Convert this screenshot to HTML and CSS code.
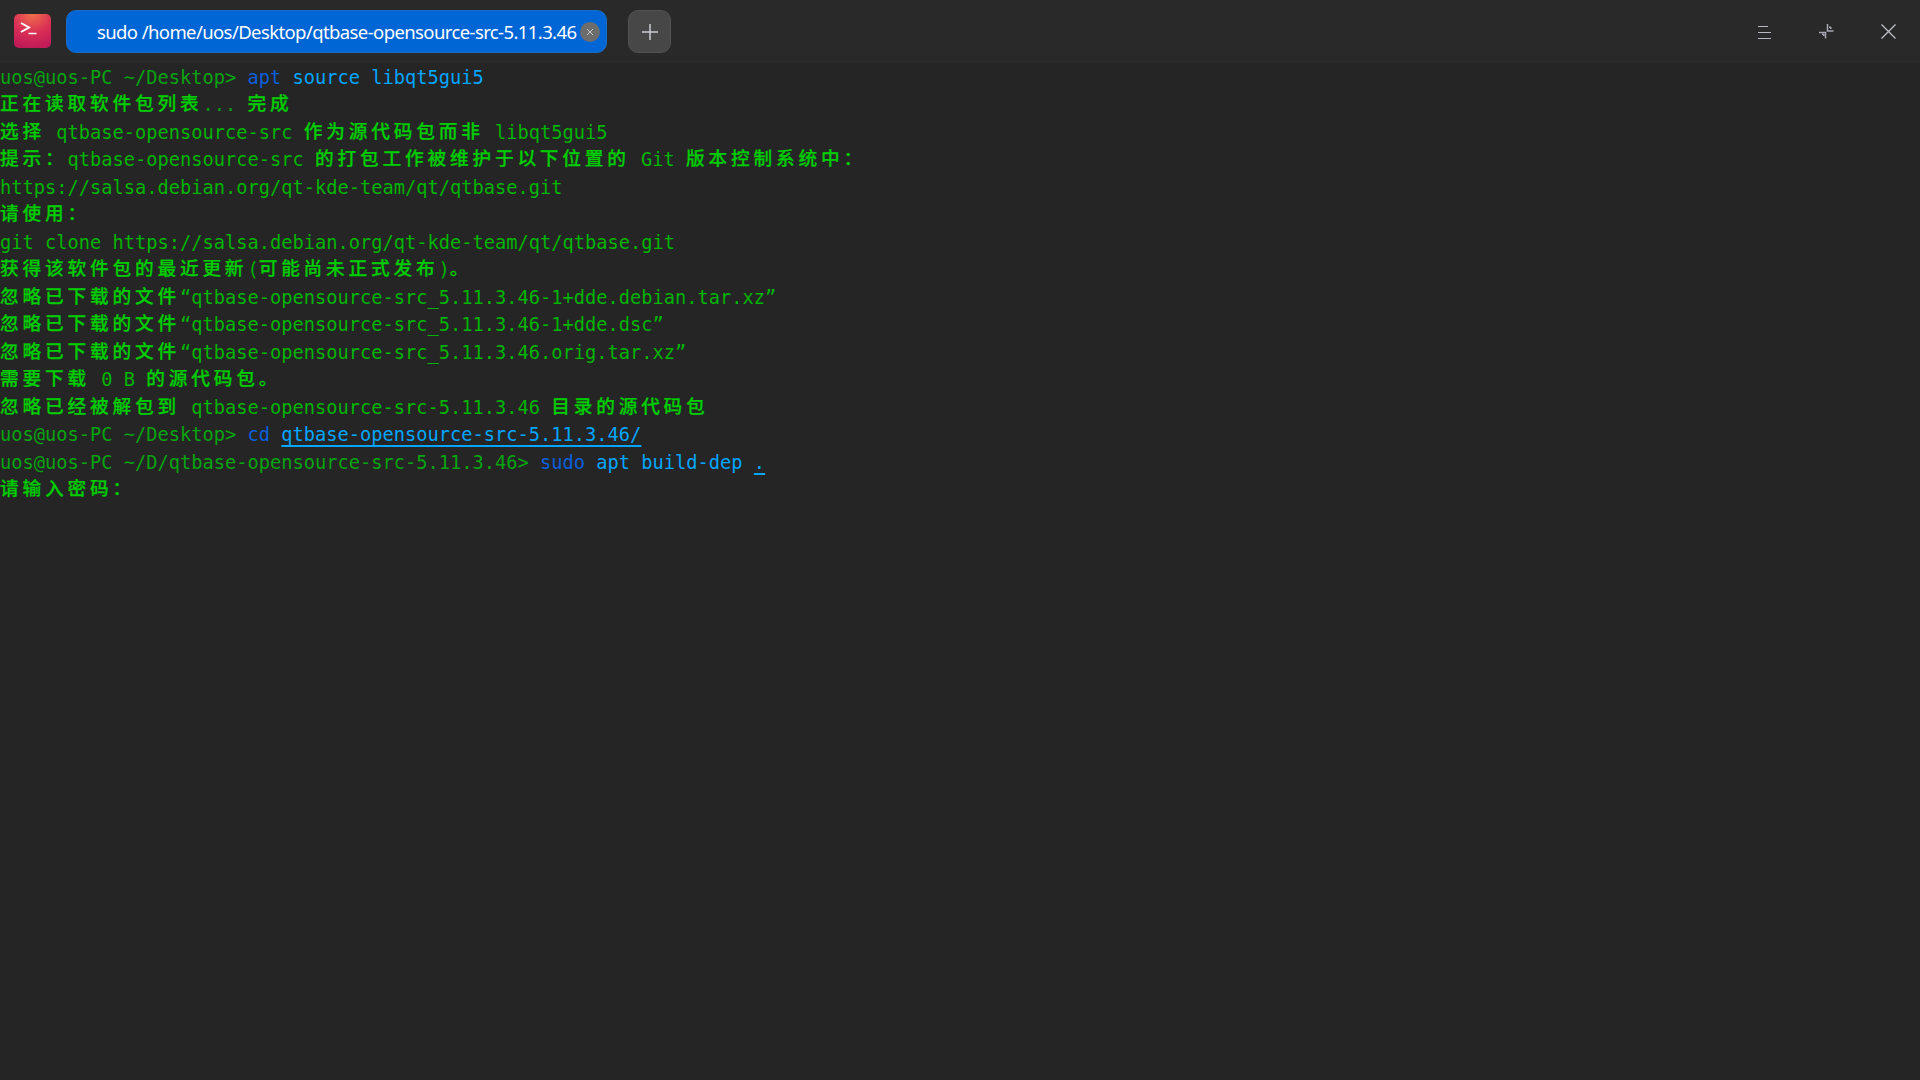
FILE: index.html
```html
<!DOCTYPE html>
<html lang="zh-CN">
<head>
<meta charset="utf-8">
<title>Terminal</title>
<link rel="stylesheet" href="styles.css">
</head>
<body>
<header class="titlebar">
  <svg class="app-icon" width="38" height="36" viewBox="0 0 38 36">
    <defs>
      <radialGradient id="appg" cx="0.5" cy="0" r="1">
        <stop offset="0" stop-color="#f0704a"/>
        <stop offset="0.55" stop-color="#d92f55"/>
        <stop offset="1" stop-color="#c01a58"/>
      </radialGradient>
    </defs>
    <rect x="0" y="0" width="37" height="34" rx="5" fill="url(#appg)"/>
    <path d="M7 9l8 4.500l-8 4.500" fill="none" stroke="#fff" stroke-width="2"/>
    <path d="M14.500 19.500h8" stroke="#fff" stroke-width="1.500"/>
  </svg>
  <div class="tab">
    <span class="tab-title">sudo /home/uos/Desktop/qtbase-opensource-src-5.11.3.46</span>
    <span class="tab-close">
      <svg width="8" height="8" viewBox="0 0 8 8"><path d="M1 1l6 6M7 1l-6 6" stroke="#c8c8c8" stroke-width="1"/></svg>
    </span>
  </div>
  <button class="add-tab">
    <svg width="18" height="18" viewBox="0 0 18 18"><path d="M9 1v16M1 9h16" stroke="#c9ccd2" stroke-width="1.500"/></svg>
  </button>
  <div class="win-buttons">
    <span class="win-btn">
      <svg width="14" height="14" viewBox="0 0 14 14"><path d="M1 1.500h10M1 7.500h13M1 13.500h13" stroke="#b4b7bf" stroke-width="1.200"/></svg>
    </span>
    <span class="win-btn">
      <svg width="15" height="15" viewBox="0 0 15 15"><path d="M8.500 0v7h6" fill="none" stroke="#a6a9b3" stroke-width="1.500"/><path d="M10 3h2v2z" fill="#a6a9b3" stroke="#a6a9b3"/><path d="M0 8.500h6.500v6" fill="none" stroke="#a6a9b3" stroke-width="1.500"/><path d="M3 10h2v2z" fill="#a6a9b3" stroke="#a6a9b3"/></svg>
    </span>
    <span class="win-btn">
      <svg width="15" height="15" viewBox="0 0 15 15"><path d="M.5.500l14 14M14.500.500l-14 14" stroke="#c0c2c9" stroke-width="1.200"/></svg>
    </span>
  </div>
</header>
<main class="term">
<div class="ln"><span class="prompt">uos@uos-PC ~/Desktop&gt; </span><span class="cmd">apt</span> <span class="arg">source libqt5gui5</span></div>
<div class="ln"><span class="zh">正在读取软件包列表</span><span class="dim">... </span><span class="zh">完成</span></div>
<div class="ln"><span class="zh">选择</span> <span class="out">qtbase-opensource-src </span><span class="zh">作为源代码包而非</span><span class="out"> libqt5gui5</span></div>
<div class="ln"><span class="zh">提示：</span><span class="out">qtbase-opensource-src </span><span class="zh">的打包工作被维护于以下位置的</span><span class="out"> Git </span><span class="zh">版本控制系统中：</span></div>
<div class="ln out">https://salsa.debian.org/qt-kde-team/qt/qtbase.git</div>
<div class="ln"><span class="zh">请使用：</span></div>
<div class="ln out">git clone https://salsa.debian.org/qt-kde-team/qt/qtbase.git</div>
<div class="ln"><span class="zh">获得该软件包的最近更新</span><span class="out">(</span><span class="zh">可能尚未正式发布</span><span class="out">)</span><span class="zh">。</span></div>
<div class="ln"><span class="zh">忽略已下载的文件</span><span class="out">“qtbase-opensource-src_5.11.3.46-1+dde.debian.tar.xz”</span></div>
<div class="ln"><span class="zh">忽略已下载的文件</span><span class="out">“qtbase-opensource-src_5.11.3.46-1+dde.dsc”</span></div>
<div class="ln"><span class="zh">忽略已下载的文件</span><span class="out">“qtbase-opensource-src_5.11.3.46.orig.tar.xz”</span></div>
<div class="ln"><span class="zh">需要下载</span><span class="out"> 0 B </span><span class="zh">的源代码包。</span></div>
<div class="ln"><span class="zh">忽略已经被解包到</span><span class="out"> qtbase-opensource-src-5.11.3.46 </span><span class="zh">目录的源代码包</span></div>
<div class="ln"><span class="prompt">uos@uos-PC ~/Desktop&gt; </span><span class="cmd">cd</span> <span class="arg link">qtbase-opensource-src-5.11.3.46/</span></div>
<div class="ln"><span class="prompt">uos@uos-PC ~/D/qtbase-opensource-src-5.11.3.46&gt; </span><span class="cmd">sudo</span> <span class="arg">apt build-dep</span> <span class="arg link">.</span></div>
<div class="ln"><span class="zh">请输入密码：</span></div>
</main>
</body>
</html>
```
FILE: styles.css
```css
html, body {
  margin: 0;
  height: 100%;
  background: #252525;
  overflow: hidden;
}
.titlebar {
  height: 63px;
  background: #292929;
  display: flex;
  align-items: center;
  padding: 0 1px 0 14px;
  box-sizing: border-box;
}
.app-icon {
  flex: none;
  margin-right: 14px;
}
.tab {
  width: 541px;
  height: 43px;
  box-sizing: border-box;
  margin-right: 21px;
  padding-left: 30px;
  display: flex;
  align-items: center;
  background: #0065d5;
  border: 1px solid #1a6cc4;
  border-radius: 10px;
  color: #fff;
  font-family: "Noto Sans", sans-serif;
  font-size: 18.500px;
}
.tab-title {
  width: 483px;
  flex: none;
  white-space: nowrap;
  letter-spacing: -0.600px;
}
.tab-close {
  width: 20px;
  height: 20px;
  flex: none;
  border-radius: 50%;
  background: #6d6d6d;
  display: flex;
  align-items: center;
  justify-content: center;
}
.add-tab {
  width: 43px;
  height: 43px;
  padding: 0;
  background: #474747;
  border: 1px solid #525252;
  border-radius: 10px;
  display: flex;
  align-items: center;
  justify-content: center;
}
.win-buttons {
  margin-left: auto;
  display: flex;
}
.win-btn {
  width: 62px;
  height: 50px;
  display: flex;
  align-items: center;
  justify-content: center;
}
.term {
  padding-top: 0.700px;
  font-family: "DejaVu Sans Mono", "Noto Sans CJK SC", monospace;
  font-size: 18.700px;
  line-height: 27.500px;
  color: #00b400;
}
.ln {
  height: 27.500px;
  white-space: pre;
}
.prompt { color: #07a40f; }
.cmd { color: #0a5fdc; }
.arg { color: #00a5ff; }
.link {
  text-decoration: underline;
  text-underline-offset: 4px;
  text-decoration-thickness: 1.500px;
}
.out { color: #00b400; }
.dim { color: #0a9a14; }
.zh {
  font-family: "Noto Sans CJK SC", sans-serif;
  font-weight: 500;
  line-height: 1;
  vertical-align: 1px;
  letter-spacing: 3.800px;
  color: #00cc00;
  -webkit-text-stroke: 0.250px #00cc00;
}
```
